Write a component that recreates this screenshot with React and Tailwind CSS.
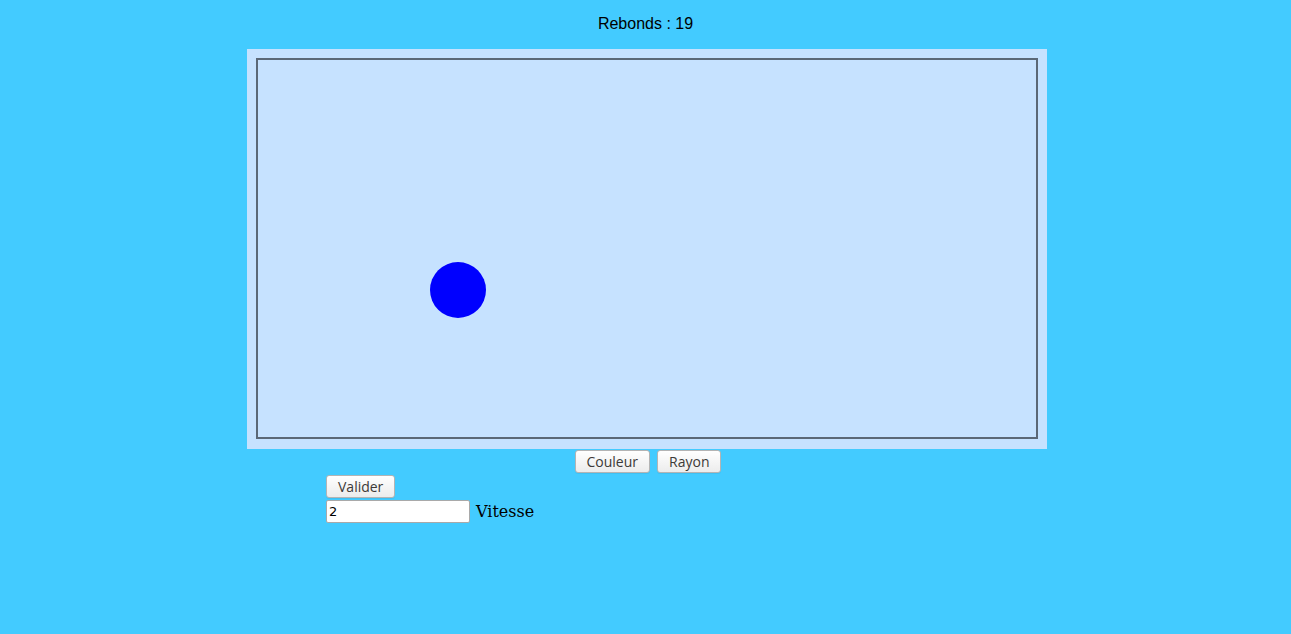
import React from "react";

export default function App() {
  const btn =
    "h-[23px] px-[11px] rounded-[3px] border border-[#b4b4b4] bg-gradient-to-b from-[#ffffff] to-[#ececec] text-[14px] leading-none text-[#3d3a38] [font-family:'Open_Sans',sans-serif] shadow-[0_1px_0_rgba(0,0,0,0.05)]";
  return (
    <div className="min-h-[634px] w-full bg-[#43cbff] flex flex-col">
      <p className="pt-[15px] text-center text-[16px] leading-[18px] text-black [font-family:'Liberation_Sans',Arial,sans-serif]">
        Rebonds : 19
      </p>
      <div className="ml-[247px] mt-[16px] w-[800px] h-[400px] bg-[#c6e2ff] pt-[9px] pl-[9px] pr-[9px] pb-[10px]">
        <div className="relative w-full h-full border-2 border-[#5b6877]">
          <div className="absolute left-[172px] top-[202px] w-[56px] h-[56px] rounded-full bg-[#0000ff]" />
        </div>
      </div>
      <div className="ml-[248px] w-[800px] mt-[1px] flex justify-center gap-[7px]">
        <button className={btn}>Couleur</button>
        <button className={btn}>Rayon</button>
      </div>
      <div className="ml-[326px] mt-[2px] flex">
        <button className={btn}>Valider</button>
      </div>
      <div className="ml-[326px] mt-[2px] flex items-center">
        <input
          defaultValue="2"
          className="w-[144px] h-[23px] bg-white border border-[#a9a9a9] rounded-[2px] px-[2px] text-[13px] text-black [font-family:'DejaVu_Sans',sans-serif] outline-none"
        />
        <span className="ml-[6px] text-[16px] leading-[18px] text-black [font-family:'DejaVu_Serif',serif]">
          Vitesse
        </span>
      </div>
    </div>
  );
}
